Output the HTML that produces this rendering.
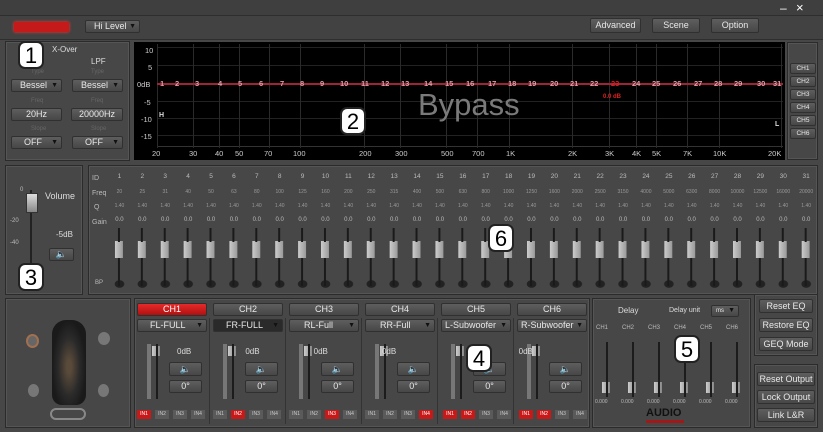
<!DOCTYPE html>
<html><head><meta charset="utf-8"><style>
*{box-sizing:border-box;margin:0;padding:0}
body{width:823px;height:432px;overflow:hidden;background:#474747;font-family:"Liberation Sans",sans-serif;color:#ddd;position:relative}
.a{position:absolute}
.btn{position:absolute;background:linear-gradient(#5e5e5e,#474747);border:1px solid #303030;color:#e8e8e8;font-size:9px;text-align:center;border-radius:2px}
.dd::after{content:"▼";position:absolute;right:3px;font-size:7px;color:#111}
.panel{position:absolute;border:1px solid #2b2b2b;background:#474747;box-shadow:inset 0 0 0 1px #555}
.badge{position:absolute;background:#fff;color:#000;border:2px solid #222;border-radius:7px;font-size:22px;text-align:center;line-height:26px;width:26px;height:28px}
.row{position:absolute;left:108px;display:flex;font-size:6px;color:#bbb}
.row span{width:22.9px;text-align:center}
.gl{position:absolute;top:44px;height:104px;width:1px;background:#2a2a2a}
.mk{position:absolute;top:79px;font-size:7.5px;color:#e1a0a8;font-weight:bold}
.xl{position:absolute;top:149px;font-size:7.5px;color:#ccc}
.yl{position:absolute;left:137px;font-size:7.5px;color:#ccc}
.chb{position:absolute;left:790px;width:26px;height:11px;font-size:6.5px;line-height:10px}
.in{position:absolute;top:410px;width:14px;height:9px;font-size:5px;line-height:9px;text-align:center;background:#5a5a5a;color:#ccc}
.in.r{background:#c81818;color:#fff}
</style></head><body>
<!-- title bar -->
<div class="a" style="left:0;top:0;width:823px;height:16px;background:#3f3f3f;border-bottom:1px solid #2e2e2e"></div>
<div class="a" style="left:780px;top:1px;font-size:12px;color:#fff">–</div>
<div class="a" style="left:796px;top:0px;font-size:13px;color:#fff">×</div>
<div class="a" style="left:0;top:16px;width:823px;height:24px;background:#424242;border-bottom:1px solid #2e2e2e"></div>
<div class="a" style="left:14px;top:22px;width:55px;height:10px;background:#c41a1a;box-shadow:0 0 3px #f33"></div>
<div class="btn dd" style="left:85px;top:20px;width:55px;height:13px;line-height:11px;text-align:left;padding-left:8px">Hi Level</div>
<div class="btn" style="left:590px;top:18px;width:51px;height:15px;line-height:13px">Advanced</div>
<div class="btn" style="left:652px;top:18px;width:48px;height:15px;line-height:13px">Scene</div>
<div class="btn" style="left:711px;top:18px;width:48px;height:15px;line-height:13px">Option</div>

<!-- panel 1 -->
<div class="panel" style="left:5px;top:41px;width:125px;height:120px"></div>
<div class="a" style="left:52px;top:45px;font-size:8px">X-Over</div>
<div class="a" style="left:91px;top:57px;font-size:8px">LPF</div>
<div class="a" style="left:31px;top:69px;font-size:6px;color:#666">Type</div>
<div class="a" style="left:91px;top:69px;font-size:6px;color:#666">Type</div>
<div class="btn dd" style="left:11px;top:79px;width:51px;height:13px;line-height:11px;text-align:left;padding-left:8px">Bessel</div>
<div class="btn dd" style="left:72px;top:79px;width:51px;height:13px;line-height:11px;text-align:left;padding-left:8px">Bessel</div>
<div class="a" style="left:31px;top:98px;font-size:6px;color:#666">Freq</div>
<div class="a" style="left:91px;top:98px;font-size:6px;color:#666">Freq</div>
<div class="btn" style="left:11px;top:108px;width:51px;height:13px;line-height:11px">20Hz</div>
<div class="btn" style="left:71px;top:108px;width:52px;height:13px;line-height:11px">20000Hz</div>
<div class="a" style="left:31px;top:126px;font-size:6px;color:#666">Slope</div>
<div class="a" style="left:91px;top:126px;font-size:6px;color:#666">Slope</div>
<div class="btn dd" style="left:11px;top:136px;width:51px;height:13px;line-height:11px;text-align:left;padding-left:12px">OFF</div>
<div class="btn dd" style="left:72px;top:136px;width:51px;height:13px;line-height:11px;text-align:left;padding-left:12px">OFF</div>

<!-- graph -->
<div class="a" style="left:134px;top:42px;width:651px;height:118px;background:#000"></div>
<div class="a" style="left:157px;top:47px;width:626px;height:1px;background:#222"></div>
<div class="a" style="left:157px;top:65px;width:626px;height:1px;background:#222"></div>
<div class="a" style="left:157px;top:101px;width:626px;height:1px;background:#222"></div>
<div class="a" style="left:157px;top:118px;width:626px;height:1px;background:#222"></div>
<div class="a" style="left:157px;top:135px;width:626px;height:1px;background:#222"></div>
<div class="a" style="left:157px;top:146px;width:626px;height:1px;background:#333"></div>
<div class="gl" style="left:157px"></div><div class="gl" style="left:193px"></div><div class="gl" style="left:219px"></div><div class="gl" style="left:239px"></div><div class="gl" style="left:269px"></div><div class="gl" style="left:300px"></div><div class="gl" style="left:364px"></div><div class="gl" style="left:400px"></div><div class="gl" style="left:446px"></div><div class="gl" style="left:477px"></div><div class="gl" style="left:509px"></div><div class="gl" style="left:572px"></div><div class="gl" style="left:609px"></div><div class="gl" style="left:636px"></div><div class="gl" style="left:656px"></div><div class="gl" style="left:687px"></div><div class="gl" style="left:719px"></div><div class="gl" style="left:781px"></div>
<div class="yl" style="top:46px;left:145px">10</div><div class="yl" style="top:63px;left:148px">5</div><div class="yl" style="top:80px">0dB</div><div class="yl" style="top:98px;left:144px">-5</div><div class="yl" style="top:115px;left:141px">-10</div><div class="yl" style="top:132px;left:141px">-15</div>
<div class="a" style="left:157px;top:83px;width:626px;height:2px;background:#a02438"></div>
<div class="mk" style="left:160px">1</div><div class="mk" style="left:175px">2</div><div class="mk" style="left:195px">3</div><div class="mk" style="left:218px">4</div><div class="mk" style="left:238px">5</div><div class="mk" style="left:259px">6</div><div class="mk" style="left:280px">7</div><div class="mk" style="left:300px">8</div><div class="mk" style="left:320px">9</div><div class="mk" style="left:340px">10</div><div class="mk" style="left:361px">11</div><div class="mk" style="left:381px">12</div><div class="mk" style="left:401px">13</div><div class="mk" style="left:424px">14</div><div class="mk" style="left:445px">15</div><div class="mk" style="left:466px">16</div><div class="mk" style="left:488px">17</div><div class="mk" style="left:508px">18</div><div class="mk" style="left:528px">19</div><div class="mk" style="left:550px">20</div><div class="mk" style="left:570px">21</div><div class="mk" style="left:590px">22</div><div class="mk" style="left:611px;color:#d22">23</div><div class="mk" style="left:632px">24</div><div class="mk" style="left:652px">25</div><div class="mk" style="left:673px">26</div><div class="mk" style="left:694px">27</div><div class="mk" style="left:714px">28</div><div class="mk" style="left:734px">29</div><div class="mk" style="left:757px">30</div><div class="mk" style="left:773px">31</div>
<div class="a" style="left:603px;top:94px;font-size:6px;color:#d22;font-weight:bold">0.0 dB</div>
<div class="a" style="left:418px;top:87px;font-size:31px;color:#7a7a7a">Bypass</div>
<div class="a" style="left:159px;top:112px;font-size:7px;font-weight:bold;color:#ddd">H</div>
<div class="a" style="left:775px;top:121px;font-size:7px;font-weight:bold;color:#ddd">L</div>
<div class="xl" style="left:152px">20</div><div class="xl" style="left:189px">30</div><div class="xl" style="left:215px">40</div><div class="xl" style="left:235px">50</div><div class="xl" style="left:264px">70</div><div class="xl" style="left:293px">100</div><div class="xl" style="left:359px">200</div><div class="xl" style="left:395px">300</div><div class="xl" style="left:441px">500</div><div class="xl" style="left:472px">700</div><div class="xl" style="left:506px">1K</div><div class="xl" style="left:568px">2K</div><div class="xl" style="left:605px">3K</div><div class="xl" style="left:632px">4K</div><div class="xl" style="left:652px">5K</div><div class="xl" style="left:683px">7K</div><div class="xl" style="left:713px">10K</div><div class="xl" style="left:768px">20K</div>
<div class="panel" style="left:787px;top:42px;width:31px;height:118px"></div>
<div class="btn chb" style="top:63px">CH1</div><div class="btn chb" style="top:76px">CH2</div><div class="btn chb" style="top:89px">CH3</div><div class="btn chb" style="top:102px">CH4</div><div class="btn chb" style="top:115px">CH5</div><div class="btn chb" style="top:128px">CH6</div>

<!-- volume -->
<div class="panel" style="left:5px;top:165px;width:78px;height:130px"></div>
<div class="a" style="left:30px;top:190px;width:2px;height:90px;background:#222"></div>
<div class="a" style="left:26px;top:193px;width:12px;height:20px;background:linear-gradient(#ddd,#888);border:1px solid #333"></div>
<div class="a" style="left:20px;top:187px;font-size:6px;color:#bbb">0</div>
<div class="a" style="left:10px;top:218px;font-size:6px;color:#bbb">-20</div>
<div class="a" style="left:10px;top:240px;font-size:6px;color:#bbb">-40</div>
<div class="a" style="left:45px;top:191px;font-size:9px">Volume</div>
<div class="a" style="left:56px;top:230px;font-size:8px">-5dB</div>
<div class="btn" style="left:49px;top:248px;width:25px;height:13px;font-size:9px;line-height:11px">🔈</div>

<!-- EQ -->
<div class="panel" style="left:88px;top:165px;width:730px;height:130px"></div>
<div class="a" style="left:92px;top:172px;font-size:7px;color:#bbb;line-height:14.5px">ID<br>Freq<br>&nbsp;Q<br>Gain</div>
<div class="a" style="left:95px;top:280px;font-size:6px;color:#bbb">BP</div>
<div class="row" style="top:173px;font-size:6.5px"><span>1</span><span>2</span><span>3</span><span>4</span><span>5</span><span>6</span><span>7</span><span>8</span><span>9</span><span>10</span><span>11</span><span>12</span><span>13</span><span>14</span><span>15</span><span>16</span><span>17</span><span>18</span><span>19</span><span>20</span><span>21</span><span>22</span><span>23</span><span>24</span><span>25</span><span>26</span><span>27</span><span>28</span><span>29</span><span>30</span><span>31</span></div>
<div class="row" style="top:189px;font-size:5px;color:#999"><span>20</span><span>25</span><span>31</span><span>40</span><span>50</span><span>63</span><span>80</span><span>100</span><span>125</span><span>160</span><span>200</span><span>250</span><span>315</span><span>400</span><span>500</span><span>630</span><span>800</span><span>1000</span><span>1250</span><span>1600</span><span>2000</span><span>2500</span><span>3150</span><span>4000</span><span>5000</span><span>6300</span><span>8000</span><span>10000</span><span>12500</span><span>16000</span><span>20000</span></div>
<div class="row" style="top:203px;font-size:5px;color:#999"><span>1.40</span><span>1.40</span><span>1.40</span><span>1.40</span><span>1.40</span><span>1.40</span><span>1.40</span><span>1.40</span><span>1.40</span><span>1.40</span><span>1.40</span><span>1.40</span><span>1.40</span><span>1.40</span><span>1.40</span><span>1.40</span><span>1.40</span><span>1.40</span><span>1.40</span><span>1.40</span><span>1.40</span><span>1.40</span><span>1.40</span><span>1.40</span><span>1.40</span><span>1.40</span><span>1.40</span><span>1.40</span><span>1.40</span><span>1.40</span><span>1.40</span></div>
<div class="row" style="top:217px"><span>0.0</span><span>0.0</span><span>0.0</span><span>0.0</span><span>0.0</span><span>0.0</span><span>0.0</span><span>0.0</span><span>0.0</span><span>0.0</span><span>0.0</span><span>0.0</span><span>0.0</span><span>0.0</span><span>0.0</span><span>0.0</span><span>0.0</span><span>0.0</span><span>0.0</span><span>0.0</span><span>0.0</span><span>0.0</span><span>0.0</span><span>0.0</span><span>0.0</span><span>0.0</span><span>0.0</span><span>0.0</span><span>0.0</span><span>0.0</span><span>0.0</span></div>
<div class="a" style="left:108px;top:228px;width:710px;height:62px;background:
linear-gradient(90deg,transparent 10px,#1a1a1a 10px,#1a1a1a 12px,transparent 12px) 0 0/22.9px 14px repeat-x,
linear-gradient(90deg,transparent 10px,#1a1a1a 10px,#1a1a1a 12px,transparent 12px) 0 30px/22.9px 28px repeat-x,
linear-gradient(90deg,transparent 7px,#ccc 7px,#999 15px,transparent 15px) 0 13px/22.9px 17px repeat-x,
radial-gradient(ellipse 5px 4px at 11.5px 56px,#222 90%,transparent 100%) 0 0/22.9px 62px repeat-x"></div>

<!-- bottom -->
<div class="panel" style="left:5px;top:298px;width:126px;height:130px"></div>
<div class="a" style="left:52px;top:320px;width:34px;height:85px;background:radial-gradient(ellipse at 50% 55%,#5a4a3a 10%,#2a2a2a 45%,#1a1a1a 70%);border-radius:14px 14px 10px 10px"></div>
<div class="a" style="left:26px;top:334px;width:13px;height:14px;border-radius:50%;border:2px solid #a07050;background:#666"></div>
<div class="a" style="left:98px;top:332px;width:12px;height:13px;border-radius:50%;background:#777"></div>
<div class="a" style="left:28px;top:384px;width:11px;height:13px;border-radius:50%;background:#777"></div>
<div class="a" style="left:98px;top:384px;width:11px;height:13px;border-radius:50%;background:#777"></div>
<div class="a" style="left:50px;top:408px;width:36px;height:12px;border-radius:6px;border:2px solid #888"></div>

<div class="panel" style="left:134px;top:298px;width:456px;height:130px"></div>
<div class="panel" style="left:592px;top:298px;width:159px;height:130px"></div>

<!-- channel strips -->
<div class="btn" style="left:137px;top:303px;width:70px;height:13px;line-height:11px;background:linear-gradient(#e52a2a,#b01010);color:#fff">CH1</div>
<div class="btn" style="left:213px;top:303px;width:70px;height:13px;line-height:11px">CH2</div>
<div class="btn" style="left:289px;top:303px;width:70px;height:13px;line-height:11px">CH3</div>
<div class="btn" style="left:365px;top:303px;width:70px;height:13px;line-height:11px">CH4</div>
<div class="btn" style="left:441px;top:303px;width:70px;height:13px;line-height:11px">CH5</div>
<div class="btn" style="left:517px;top:303px;width:70px;height:13px;line-height:11px">CH6</div>
<div class="btn dd" style="left:137px;top:319px;width:70px;height:13px;line-height:11px;text-align:left;padding-left:12px">FL-FULL</div>
<div class="btn dd" style="left:213px;top:319px;width:70px;height:13px;line-height:11px;text-align:left;padding-left:12px;background:#2a2a2a">FR-FULL</div>
<div class="btn dd" style="left:289px;top:319px;width:70px;height:13px;line-height:11px;text-align:left;padding-left:14px">RL-Full</div>
<div class="btn dd" style="left:365px;top:319px;width:70px;height:13px;line-height:11px;text-align:left;padding-left:14px">RR-Full</div>
<div class="btn dd" style="left:441px;top:319px;width:70px;height:13px;line-height:11px;text-align:left;padding-left:3px">L-Subwoofer</div>
<div class="btn dd" style="left:517px;top:319px;width:70px;height:13px;line-height:11px;text-align:left;padding-left:3px">R-Subwoofer</div>
<div class="a" style="left:209px;top:318px;width:1px;height:106px;background:#333"></div>
<div class="a" style="left:285px;top:318px;width:1px;height:106px;background:#333"></div>
<div class="a" style="left:361px;top:318px;width:1px;height:106px;background:#333"></div>
<div class="a" style="left:437px;top:318px;width:1px;height:106px;background:#333"></div>
<div class="a" style="left:513px;top:318px;width:1px;height:106px;background:#333"></div>
<!-- strip sliders -->
<div class="a" style="left:137px;top:344px;width:456px;height:55px;background:
linear-gradient(90deg,transparent 19px,#1c1c1c 19px,#1c1c1c 21px,transparent 21px) 0 0/76px 55px repeat-x,
linear-gradient(90deg,transparent 15px,#ccc 15px,#888 23px,transparent 23px) 0 2px/76px 10px repeat-x,
linear-gradient(90deg,transparent 10px,#777 10px,#777 14px,transparent 14px) 0 0/76px 5px repeat"></div>
<div class="a" style="left:177px;top:347px;font-size:8px;width:410px;display:flex"><span style="width:76px">0dB</span><span style="width:76px">0dB</span><span style="width:76px">0dB</span><span style="width:76px">0dB</span><span style="width:76px"></span><span style="width:76px">0dB</span></div>
<div class="btn" style="left:169px;top:362px;width:33px;height:14px;font-size:9px;line-height:12px">🔈</div>
<div class="btn" style="left:245px;top:362px;width:33px;height:14px;font-size:9px;line-height:12px">🔈</div>
<div class="btn" style="left:321px;top:362px;width:33px;height:14px;font-size:9px;line-height:12px">🔈</div>
<div class="btn" style="left:397px;top:362px;width:33px;height:14px;font-size:9px;line-height:12px">🔈</div>
<div class="btn" style="left:473px;top:362px;width:33px;height:14px;font-size:9px;line-height:12px">🔈</div>
<div class="btn" style="left:549px;top:362px;width:33px;height:14px;font-size:9px;line-height:12px">🔈</div>
<div class="btn" style="left:169px;top:380px;width:33px;height:13px;line-height:11px">0°</div>
<div class="btn" style="left:245px;top:380px;width:33px;height:13px;line-height:11px">0°</div>
<div class="btn" style="left:321px;top:380px;width:33px;height:13px;line-height:11px">0°</div>
<div class="btn" style="left:397px;top:380px;width:33px;height:13px;line-height:11px">0°</div>
<div class="btn" style="left:473px;top:380px;width:33px;height:13px;line-height:11px">0°</div>
<div class="btn" style="left:549px;top:380px;width:33px;height:13px;line-height:11px">0°</div>
<!-- IN buttons -->
<div class="in r" style="left:137px">IN1</div><div class="in" style="left:155px">IN2</div><div class="in" style="left:173px">IN3</div><div class="in" style="left:191px">IN4</div>
<div class="in" style="left:213px">IN1</div><div class="in r" style="left:231px">IN2</div><div class="in" style="left:249px">IN3</div><div class="in" style="left:267px">IN4</div>
<div class="in" style="left:289px">IN1</div><div class="in" style="left:307px">IN2</div><div class="in r" style="left:325px">IN3</div><div class="in" style="left:343px">IN4</div>
<div class="in" style="left:365px">IN1</div><div class="in" style="left:383px">IN2</div><div class="in" style="left:401px">IN3</div><div class="in r" style="left:419px">IN4</div>
<div class="in r" style="left:443px">IN1</div><div class="in r" style="left:461px">IN2</div><div class="in" style="left:479px">IN3</div><div class="in" style="left:497px">IN4</div>
<div class="in r" style="left:519px">IN1</div><div class="in r" style="left:537px">IN2</div><div class="in" style="left:555px">IN3</div><div class="in" style="left:573px">IN4</div>

<!-- delay -->
<div class="a" style="left:618px;top:306px;font-size:8px">Delay</div>
<div class="a" style="left:669px;top:307px;font-size:7px">Delay unit</div>
<div class="btn dd" style="left:711px;top:305px;width:28px;height:12px;font-size:6px;line-height:10px;text-align:left;padding-left:4px">ms</div>
<div class="a" style="left:596px;top:325px;font-size:6px;color:#bbb;display:flex;width:156px"><span style="width:26px">CH1</span><span style="width:26px">CH2</span><span style="width:26px">CH3</span><span style="width:26px">CH4</span><span style="width:26px">CH5</span><span style="width:26px">CH6</span></div>
<div class="a" style="left:595px;top:342px;width:156px;height:55px;background:
linear-gradient(90deg,transparent 11px,#1c1c1c 11px,#1c1c1c 13px,transparent 13px) 0 0/26px 55px repeat-x,
linear-gradient(90deg,transparent 7px,#ccc 7px,#888 15px,transparent 15px) 0 40px/26px 11px repeat-x"></div>
<div class="a" style="left:595px;top:399px;font-size:5px;color:#bbb;display:flex;width:156px"><span style="width:26px">0.000</span><span style="width:26px">0.000</span><span style="width:26px">0.000</span><span style="width:26px">0.000</span><span style="width:26px">0.000</span><span style="width:26px">0.000</span></div>
<div class="a" style="left:646px;top:407px;font-size:11px;font-weight:bold;color:#111">AUDIO</div>
<div class="a" style="left:646px;top:420px;width:38px;height:3px;background:#a01818"></div>

<!-- right buttons -->
<div class="panel" style="left:754px;top:294px;width:64px;height:62px"></div>
<div class="panel" style="left:754px;top:364px;width:64px;height:64px"></div>
<div class="btn" style="left:759px;top:299px;width:54px;height:14px;line-height:12px">Reset EQ</div>
<div class="btn" style="left:759px;top:318px;width:54px;height:14px;line-height:12px">Restore EQ</div>
<div class="btn" style="left:759px;top:337px;width:54px;height:14px;line-height:12px">GEQ Mode</div>
<div class="btn" style="left:757px;top:372px;width:58px;height:14px;line-height:12px">Reset Output</div>
<div class="btn" style="left:757px;top:390px;width:58px;height:14px;line-height:12px">Lock Output</div>
<div class="btn" style="left:757px;top:408px;width:58px;height:14px;line-height:12px">Link L&amp;R</div>

<!-- badges -->
<div class="badge" style="left:18px;top:41px">1</div>
<div class="badge" style="left:340px;top:107px">2</div>
<div class="badge" style="left:18px;top:263px">3</div>
<div class="badge" style="left:466px;top:344px">4</div>
<div class="badge" style="left:674px;top:335px">5</div>
<div class="badge" style="left:488px;top:224px">6</div>
</body></html>
